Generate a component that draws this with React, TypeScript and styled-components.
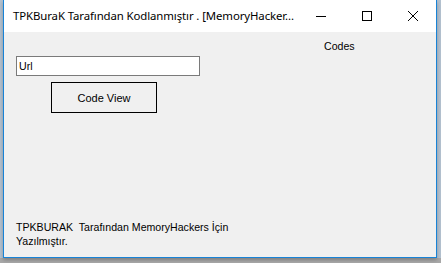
import React from "react";
import styled, { createGlobalStyle } from "styled-components";

const Global = createGlobalStyle`
  html, body { margin: 0; padding: 0; }
  body { width: 441px; height: 263px; overflow: hidden; background: #9a9a9a; }
`;

const Desktop = styled.div`
  width: 441px;
  height: 263px;
  display: flex;
  align-items: flex-start;
  padding-left: 3px;
  box-sizing: border-box;
  background: linear-gradient(to bottom, #b4c2d0 0, #b4c2d0 258px, #a9a9a9 258px);
`;

const Window = styled.div`
  width: 434px;
  height: 258px;
  box-sizing: border-box;
  border: 1px solid #1883d7;
  border-top: none;
  display: flex;
  flex-direction: column;
  background: #f0f0f0;
  box-shadow: 0 2px 4px rgba(0, 0, 0, 0.25);
`;

const TitleBar = styled.div`
  height: 32px;
  flex: none;
  background: #ffffff;
  display: flex;
  align-items: center;
`;

const Title = styled.div`
  flex: 1;
  min-width: 0;
  padding-left: 9px;
  font-family: "Noto Sans", "Open Sans", sans-serif;
  font-size: 11.4px;
  letter-spacing: -0.1px;
  color: #000;
  white-space: nowrap;
  padding-bottom: 1px;
`;

const Controls = styled.div`
  display: flex;
  height: 100%;
  flex: none;
`;

const CtrlButton = styled.div`
  width: 46px;
  height: 100%;
  display: flex;
  align-items: center;
  justify-content: center;
`;

const Client = styled.div`
  flex: 1;
  display: flex;
  flex-direction: column;
  font-family: "Liberation Sans", Arial, sans-serif;
  font-size: 10.6px;
  color: #000;
  padding-top: 8px;
  padding-bottom: 9px;
`;

const CodesLabel = styled.div`
  margin-left: 320px;
  height: 13px;
  line-height: 13px;
`;

const UrlBox = styled.div`
  margin-left: 12px;
  margin-top: 3px;
  width: 184px;
  height: 20px;
  box-sizing: border-box;
  border: 1px solid #7a7a7a;
  background: #fff;
  padding-left: 2px;
  line-height: 18px;
`;

const CodeButton = styled.div`
  margin-left: 47px;
  margin-top: 6px;
  width: 106px;
  height: 31px;
  box-sizing: border-box;
  border: 1px solid #000;
  background: #f0f0f0;
  display: flex;
  align-items: center;
  justify-content: center;
  font-size: 11px;
`;

const Spacer = styled.div`
  flex: 1;
`;

const Footer = styled.div`
  margin-left: 12px;
  line-height: 14px;
  white-space: pre;
`;

export default function App() {
  return (
    <>
      <Global />
      <Desktop>
        <Window>
          <TitleBar>
            <Title>TPKBuraK Tarafından Kodlanmıştır . [MemoryHacker...</Title>
            <Controls>
              <CtrlButton>
                <svg width="10" height="10" viewBox="0 0 10 10">
                  <path d="M0 5.5 H10" stroke="#000" strokeWidth="1" />
                </svg>
              </CtrlButton>
              <CtrlButton>
                <svg width="10" height="10" viewBox="0 0 10 10">
                  <rect x="0.5" y="0.5" width="9" height="9" fill="none" stroke="#000" strokeWidth="1" />
                </svg>
              </CtrlButton>
              <CtrlButton>
                <svg width="10" height="10" viewBox="0 0 10 10">
                  <path d="M0 0 L10 10 M10 0 L0 10" stroke="#000" strokeWidth="1" />
                </svg>
              </CtrlButton>
            </Controls>
          </TitleBar>
          <Client>
            <CodesLabel>Codes</CodesLabel>
            <UrlBox>Url</UrlBox>
            <CodeButton>Code View</CodeButton>
            <Spacer />
            <Footer>{"TPKBURAK  Tarafından MemoryHackers İçin\nYazılmıştır."}</Footer>
          </Client>
        </Window>
      </Desktop>
    </>
  );
}
